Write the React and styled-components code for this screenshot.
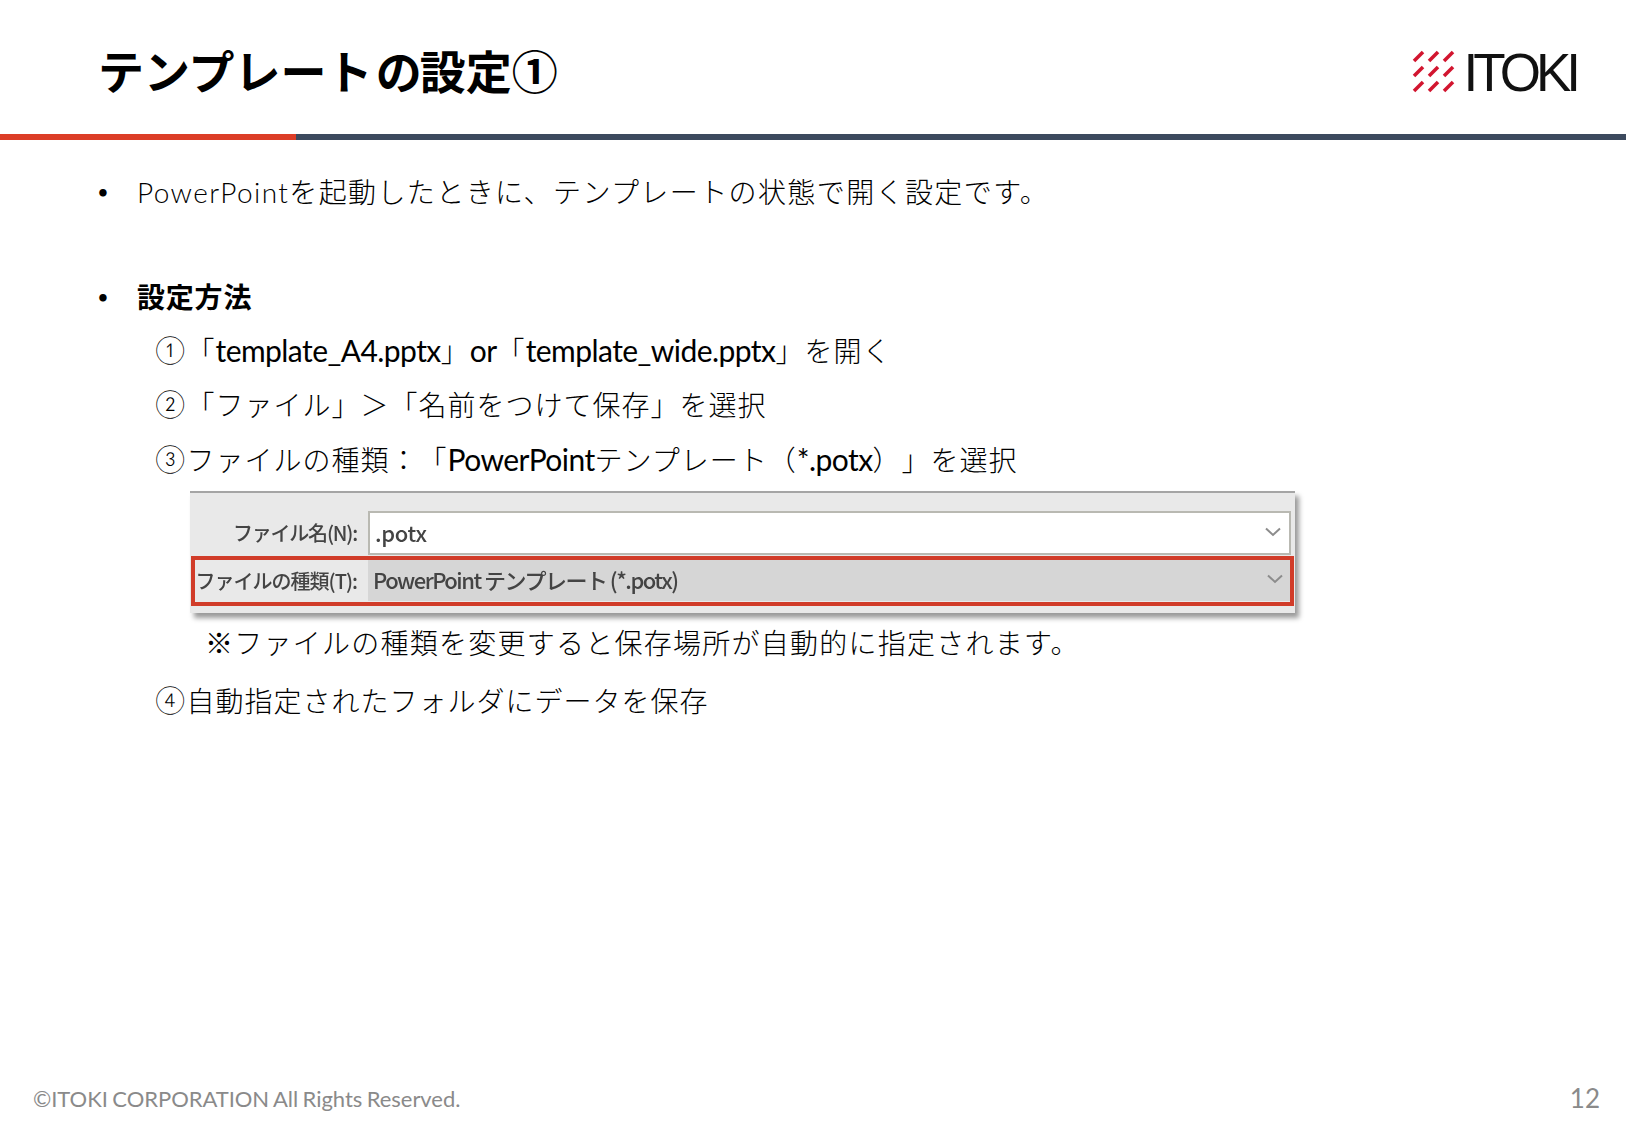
import React from "react";
import styled, { createGlobalStyle } from "styled-components";

const GlobalStyle = createGlobalStyle`
  html, body {
    margin: 0;
    padding: 0;
    background: #fff;
  }
`;

const JP = `Lato, "Noto Sans CJK JP", sans-serif`;

const Page = styled.div`
  width: 1626px;
  height: 1125px;
  display: flex;
  flex-direction: column;
  overflow: hidden;
  font-family: ${JP};
  color: #000;
  text-spacing-trim: space-all;
`;

const Header = styled.header`
  height: 134px;
  display: flex;
  justify-content: space-between;
  align-items: center;
  padding: 3px 50px 0 98px;
  box-sizing: border-box;
`;

const Title = styled.h1`
  margin: 0;
  font-size: 46px;
  font-weight: 700;
  color: #000;
  font-family: "Noto Sans CJK JP", sans-serif;
`;

const TitleNo = styled.span`
  margin: 0 -2px 0 3px;
`;

const Logo = styled.div`
  display: flex;
  align-items: center;
  gap: 9px;
  padding-top: 5px;
`;

const LogoText = styled.span`
  font-family: "Liberation Sans", sans-serif;
  font-size: 53px;
  line-height: 1;
  letter-spacing: -5px;
  color: #111;
  padding-top: 3px;
`;

const Rule = styled.div`
  height: 6px;
  display: flex;
`;

const RuleRed = styled.div`
  width: 296px;
  background: #dc3d27;
`;

const RuleNavy = styled.div`
  flex: 1;
  background: #3c4a5e;
`;

const Content = styled.main`
  flex: 1;
  padding: 31px 0 0 98px;
`;

const Bullet = styled.div`
  display: flex;
  align-items: center;
  height: 40px;
  font-size: 28px;
  font-weight: ${(p) => (p.$bold ? 700 : 300)};
  letter-spacing: ${(p) => (p.$bold ? "0.8px" : "1.4px")};
  margin-top: ${(p) => p.$top || 0}px;
  &::before {
    content: "•";
    width: 39px;
    flex: none;
    font-weight: 700;
    font-size: 17px;
  }
`;

const Step = styled.div`
  height: 40px;
  line-height: 40px;
  padding-left: 57px;
  margin-top: ${(p) => p.$top ?? 14.5}px;
  font-size: 28px;
  font-weight: 300;
  letter-spacing: 1px;
  white-space: pre;
`;

const FirstStep = styled(Step)`
  margin-top: 12.5px;
`;

const Num = styled.span`
  vertical-align: 2px;
`;

const Latin = styled.span`
  font-size: 30px;
  font-weight: 400;
  letter-spacing: -0.55px;
`;

const Note = styled(Step)`
  padding-left: 107px;
  margin-top: 10px;
  letter-spacing: 1.25px;
`;

const Shot = styled.div`
  margin: 13px 0 0 92px;
  width: 1105px;
  height: 122px;
  box-sizing: border-box;
  background: #e9e9e9;
  border-top: 2px solid #a5a5a5;
  box-shadow: 4px 5px 5px rgba(0, 0, 0, 0.4);
  padding: 18px 4px 0 3px;
  display: flex;
  flex-direction: column;
  font-family: "Noto Sans CJK JP", sans-serif;
  color: #444;
  filter: blur(0.4px);
`;

const ShotRow = styled.div`
  display: grid;
  grid-template-columns: 175px 1fr;
  height: ${(p) => (p.$hit ? 41 : 44)}px;
  margin-top: ${(p) => (p.$hit ? 5 : 0)}px;
  position: relative;
`;

const ShotLabel = styled.div`
  font-size: 20px;
  font-weight: 500;
  letter-spacing: ${(p) => (p.$hit ? "-1px" : "-1.2px")};
  text-align: right;
  padding-right: 11px;
  line-height: ${(p) => (p.$hit ? 41 : 44)}px;
  white-space: nowrap;
`;

const ShotField = styled.div`
  display: flex;
  align-items: center;
  justify-content: space-between;
  padding: 0 8px 2px 5px;
  font-size: 22px;
  font-weight: 500;
  letter-spacing: ${(p) => (p.$hit ? "-1.5px" : "-0.3px")};
  box-sizing: border-box;
  background: ${(p) => (p.$hit ? "#d6d6d6" : "#fff")};
  border: ${(p) => (p.$hit ? "none" : "2px solid #b9b9b2")};
`;

const Highlight = styled.div`
  position: absolute;
  inset: -4px -3px -5px -2px;
  border: 4px solid #d13c29;
  pointer-events: none;
`;

const Footer = styled.footer`
  display: flex;
  justify-content: space-between;
  align-items: center;
  height: 50px;
  padding: 0 26px 4px 33px;
  box-sizing: border-box;
  color: #8a8a8a;
`;

const Copy = styled.span`
  font-family: Lato, sans-serif;
  font-size: 22px;
  letter-spacing: -0.05px;
  word-spacing: -1px;
`;

const PageNo = styled.span`
  font-family: Lato, sans-serif;
  font-size: 26px;
`;

function Chevron() {
  return (
    <svg width="16" height="10" viewBox="0 0 16 10" fill="none">
      <path d="M1 1.5 L8 8 L15 1.5" stroke="#8c8c8c" strokeWidth="2" />
    </svg>
  );
}

function LogoMark() {
  const cells = [];
  for (let r = 0; r < 3; r++) {
    for (let c = 0; c < 3; c++) {
      const x = 2 + c * 15;
      const y = 12 + r * 15;
      cells.push(
        <line key={`${r}-${c}`} x1={x} y1={y} x2={x + 9} y2={y - 9} stroke="#d2152f" strokeWidth="3.6" />
      );
    }
  }
  return (
    <svg width="43" height="44" viewBox="0 0 43 44">
      {cells}
    </svg>
  );
}

export default function App() {
  return (
    <Page>
      <GlobalStyle />
      <Header>
        <Title>テンプレート<TitleNo>の</TitleNo>設定①</Title>
        <Logo>
          <LogoMark />
          <LogoText>ITOKI</LogoText>
        </Logo>
      </Header>
      <Rule>
        <RuleRed />
        <RuleNavy />
      </Rule>
      <Content>
        <Bullet>PowerPointを起動したときに、テンプレートの状態で開く設定です。</Bullet>
        <Bullet $bold $top={65}>設定方法</Bullet>
        <FirstStep><Num>①</Num>「<Latin>template_A4.pptx</Latin>」<Latin>or</Latin>「<Latin>template_wide.pptx</Latin>」を開く</FirstStep>
        <Step><Num>②</Num>「ファイル」＞「名前をつけて保存」を選択</Step>
        <Step><Num>③</Num>ファイルの種類：「<Latin>PowerPoint</Latin>テンプレート（<Latin>*.potx</Latin>）」を選択</Step>
        <Shot>
          <ShotRow>
            <ShotLabel>ファイル名(N):</ShotLabel>
            <ShotField>
              .potx
              <Chevron />
            </ShotField>
          </ShotRow>
          <ShotRow $hit>
            <ShotLabel $hit>ファイルの種類(T):</ShotLabel>
            <ShotField $hit>
              PowerPoint テンプレート (*.potx)
              <Chevron />
            </ShotField>
            <Highlight />
          </ShotRow>
        </Shot>
        <Note>※ファイルの種類を変更すると保存場所が自動的に指定されます。</Note>
        <Step $top={16}><Num>④</Num>自動指定されたフォルダにデータを保存</Step>
      </Content>
      <Footer>
        <Copy>©ITOKI CORPORATION All Rights Reserved.</Copy>
        <PageNo>12</PageNo>
      </Footer>
    </Page>
  );
}
